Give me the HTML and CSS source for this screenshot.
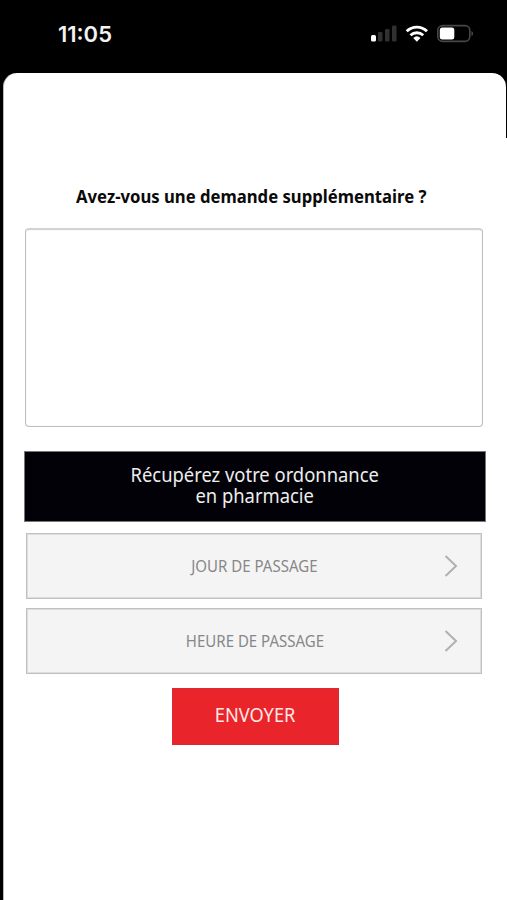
FILE: index.html
```html
<!DOCTYPE html>
<html lang="fr">
<head>
<meta charset="utf-8">
<title>Ordonnance</title>
<link rel="stylesheet" href="styles.css">
</head>
<body>
<header class="status">
  <span class="time">11:05</span>
  <svg class="signals" width="104" height="20" viewBox="0 0 104 20">
    <rect x="1" y="11" width="5" height="6.500" rx="1.500" fill="#fff"/>
    <g fill="#303030">
      <rect x="8" y="8" width="4.500" height="9.500" rx="1.200"/>
      <rect x="15" y="5" width="4.500" height="12.500" rx="1.200"/>
      <rect x="22" y="1.500" width="4.500" height="16" rx="1.200"/>
    </g>
    <g fill="none" stroke="#fff" stroke-width="2.800">
      <path d="M36.700 7.300A14.300 14.300 0 0 1 57 7.300"/>
      <path d="M40.500 11.300A9.200 9.200 0 0 1 53.200 11.300"/>
    </g>
    <path d="M43.200 13.900A5.500 5.500 0 0 1 50.500 13.900L46.850 17.700Z" fill="#fff"/>
    <rect x="67.800" y="1.600" width="32" height="15.800" rx="4.800" fill="none" stroke="#464646" stroke-width="1.600"/>
    <rect x="69.800" y="3.600" width="14.500" height="11.800" rx="2.500" fill="#fff"/>
    <path d="M101.500 7Q103 7.500 103 9.500T101.500 12Z" fill="#505050"/>
  </svg>
</header>
<main class="sheet">
  <h1 class="title"><span class="fit">Avez-vous une demande supplémentaire ?</span></h1>
  <textarea class="request" aria-label="Demande"></textarea>
  <h2 class="banner">
    <span class="fit">Récupérez votre ordonnance<br>en pharmacie</span>
  </h2>
  <div class="picker">
    <span class="fit">JOUR DE PASSAGE</span>
    <svg class="chevron" width="14" height="24" viewBox="0 0 14 24"><path d="M1.500 2L12 12L1.500 22"/></svg>
  </div>
  <div class="picker">
    <span class="fit">HEURE DE PASSAGE</span>
    <svg class="chevron" width="14" height="24" viewBox="0 0 14 24"><path d="M1.500 2L12 12L1.500 22"/></svg>
  </div>
  <button class="send"><span class="fit">ENVOYER</span></button>
</main>
</body>
</html>
```
FILE: styles.css
```css
* { box-sizing: border-box; }
body {
  margin: 0;
  height: 900px;
  overflow: hidden;
  display: flex;
  flex-direction: column;
  background: linear-gradient(#000, #000) 0 0 / 100% 138px no-repeat,
    linear-gradient(#000, #000) 0 0 / 3px 100% no-repeat, #fff;
  font-family: "Noto Sans", sans-serif;
}
.status {
  height: 73px;
  flex: none;
  display: flex;
  justify-content: space-between;
  padding: 0 33px 0 58px;
}
.time {
  margin-top: 19px;
  color: #f2f2f2;
  font: 600 22px/30px Inter, sans-serif;
}
.signals { margin-top: 24px; }
.sheet {
  flex: 1;
  margin: 0 1px 0 3px;
  padding: 110px 20px 0 21px;
  background: #fff;
  border-left: 1px solid #bbb;
  border-radius: 14px 14px 0 0;
  display: flex;
  flex-direction: column;
}
.fit {
  display: inline-block;
  white-space: nowrap;
  transform-origin: center;
}
.title {
  margin: 0 8px 0 0;
  height: 45px;
  font-size: 18.500px;
  line-height: 26px;
  text-align: center;
  color: #0a0a0a;
}
.title .fit { transform: scaleX(.902); }
.request {
  height: 199px;
  flex: none;
  margin: 0 3px 0 0;
  border: 1px solid #c0c0c0;
  border-top: 2px solid #d2d2d2;
  border-radius: 4px;
  resize: none;
  box-shadow: inset 0 0 1px #ccc;
}
.banner {
  margin: 23.500px 0 0 -1px;
  height: 71.500px;
  padding-top: 12px;
  background: #020107;
  border: 1px solid #777;
  color: #ededed;
  font-size: 19.500px;
  font-weight: 400;
  line-height: 21px;
  text-align: center;
}
.banner .fit { transform: scaleX(.943); }
.picker {
  display: flex;
  align-items: center;
  justify-content: center;
  position: relative;
  height: 66px;
  margin: 11px 4px 0 1px;
  padding: 0 0 2px 1px;
  border: 1px solid #c0c0c0;
  box-shadow: inset 0 0 0 1px #dedede;
  background: #f4f4f4;
  color: #878787;
  font-size: 16.500px;
}
.picker .fit { transform: scaleX(.91); }
.picker + .picker { margin-top: 9px; }
.chevron {
  position: absolute;
  top: 20px;
  right: 23px;
  fill: none;
  stroke: #b0b0b0;
  stroke-width: 2;
}
.send {
  align-self: center;
  margin: 14px 1px 0 0;
  width: 167px;
  height: 57px;
  padding: 0 0 4px;
  border: 1px solid #d62a35;
  background: #e9242b;
  color: #ffe9e6;
  font: 19.500px "Noto Sans", sans-serif;
}
.send .fit { transform: scaleX(.935); }
```
